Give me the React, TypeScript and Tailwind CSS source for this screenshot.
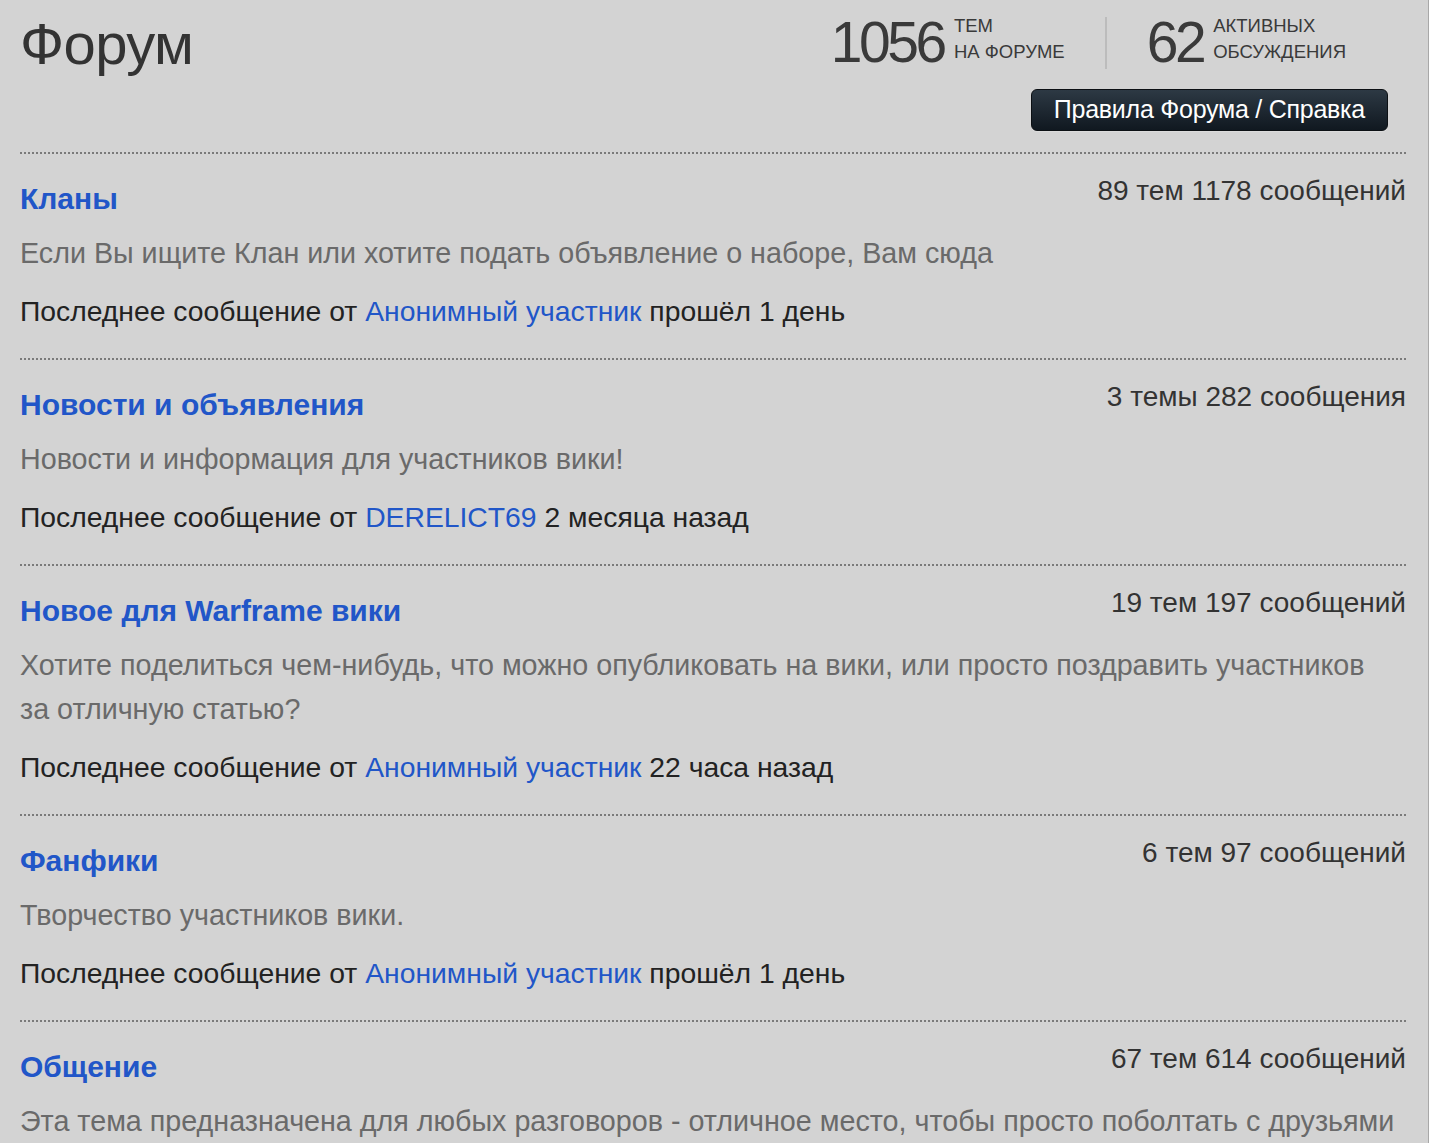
import React from 'react'

interface Board {
  title: string
  stats: string
  description: string
  author: string
  when: string
}

const boards: Board[] = [
  {
    title: 'Кланы',
    stats: '89 тем 1178 сообщений',
    description: 'Если Вы ищите Клан или хотите подать объявление о наборе, Вам сюда',
    author: 'Анонимный участник',
    when: 'прошёл 1 день'
  },
  {
    title: 'Новости и объявления',
    stats: '3 темы 282 сообщения',
    description: 'Новости и информация для участников вики!',
    author: 'DERELICT69',
    when: '2 месяца назад'
  },
  {
    title: 'Новое для Warframe вики',
    stats: '19 тем 197 сообщений',
    description:
      'Хотите поделиться чем-нибудь, что можно опубликовать на вики, или просто поздравить участников за отличную статью?',
    author: 'Анонимный участник',
    when: '22 часа назад'
  },
  {
    title: 'Фанфики',
    stats: '6 тем 97 сообщений',
    description: 'Творчество участников вики.',
    author: 'Анонимный участник',
    when: 'прошёл 1 день'
  },
  {
    title: 'Общение',
    stats: '67 тем 614 сообщений',
    description:
      'Эта тема предназначена для любых разговоров - отличное место, чтобы просто поболтать с друзьями',
    author: 'Анонимный участник',
    when: 'прошёл 1 день'
  }
]

function Dotted() {
  return (
    <div className="h-[2px] w-full bg-[linear-gradient(to_right,#7a7a7a_50%,transparent_50%)] bg-[length:4px_2px]" />
  )
}

function Stat({ value, top, bottom }: { value: string; top: string; bottom: string }) {
  return (
    <div className="flex items-center">
      <span className="text-[57px] leading-none tracking-[-0.06em] text-[#3a3a3a] mr-[10px]">{value}</span>
      <div className="flex flex-col -mt-[8px] text-[18.5px] leading-[26px] uppercase text-[#3a3a3a]">
        <span>{top}</span>
        <span>{bottom}</span>
      </div>
    </div>
  )
}

export default function App() {
  return (
    <div
      className="min-h-screen w-full bg-[#d3d3d3] border-r border-[#a8a8a8] overflow-hidden"
      style={{ fontFamily: '"Liberation Sans", Arial, sans-serif' }}
    >
      <div className="px-5">
        {/* Header */}
        <div className="flex justify-between items-start pt-[11px] pb-[21px]">
          <h1 className="mt-[1px] text-[58px] leading-[64px] text-[#333] tracking-[-0.01em]">Форум</h1>

          <div className="flex flex-col items-end pr-5">
            <div className="flex items-center mt-[3px] mr-[42px]">
              <Stat value="1056" top="Тем" bottom="на форуме" />
              <div className="w-[2px] h-[52px] bg-[#bcbcbc] mx-[40px]" />
              <Stat value="62" top="Активных" bottom="обсуждения" />
            </div>
            <button className="mt-[18px] h-[42px] px-[22px] rounded-[6px] border border-[#0c1014] bg-[linear-gradient(to_bottom,#2d3944,#101820)] text-white text-[25px] tracking-[-0.01em] shadow-[0_1px_0_rgba(255,255,255,0.2)]">
              Правила Форума / Справка
            </button>
          </div>
        </div>

        <Dotted />

        {boards.map((b) => (
          <div key={b.title}>
            <div className="pt-[15px] pb-[25px]">
              <div className="flex justify-between items-start">
                <a className="mt-[10px] text-[30px] leading-[40px] font-bold text-[#2156c8]">{b.title}</a>
                <span className="mt-[2px] text-[28px] leading-[40px] text-[#333] pr-[2px]">{b.stats}</span>
              </div>
              <p className="mt-[12px] max-w-[1380px] text-[28.7px] leading-[44px] text-[#6a6a6a]">{b.description}</p>
              <p className="mt-[14px] text-[28.3px] leading-[44px] text-[#222]">
                Последнее сообщение от <a className="text-[#2156c8]">{b.author}</a> {b.when}
              </p>
            </div>
            <Dotted />
          </div>
        ))}
      </div>
    </div>
  )
}
